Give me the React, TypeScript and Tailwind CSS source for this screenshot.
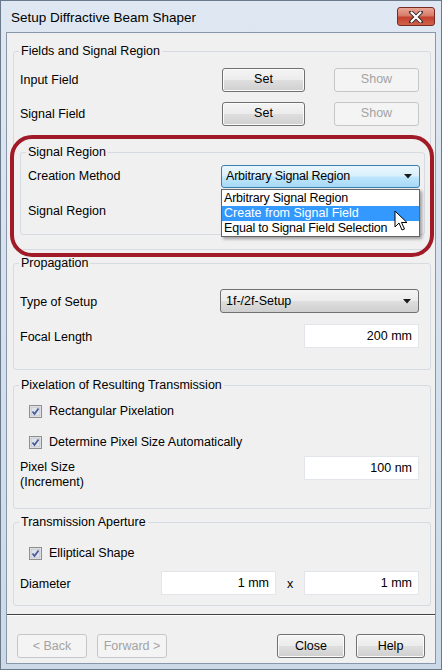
import React from "react";

const font = { fontFamily: '"Liberation Sans", Arial, sans-serif' };

function Btn({ children, w, disabled }: { children: React.ReactNode; w: string; disabled?: boolean }) {
  return (
    <div
      className={
        "h-[24px] flex items-center justify-center rounded-[3px] border text-[12.5px] " +
        w +
        " " +
        (disabled
          ? "border-[#c3c7ca] bg-[#f4f4f4] text-[#a3a3a3]"
          : "border-[#707070] bg-[linear-gradient(to_bottom,#f4f4f4_0%,#ececec_48%,#dedede_52%,#cfcfcf_100%)] text-black shadow-[inset_0_0_0_1px_#fbfbfb]")
      }
    >
      {children}
    </div>
  );
}

function Arrow() {
  return (
    <svg width="9" height="5" viewBox="0 0 9 5">
      <path d="M0 0 H8 L4 4.5 Z" fill="#1a1a1a" />
    </svg>
  );
}

function Check() {
  return (
    <svg width="13" height="13" viewBox="0 0 13 13">
      <rect x="0.5" y="0.5" width="12" height="12" fill="#f4f4f4" stroke="#8e8f8f" />
      <rect x="2" y="2" width="9" height="9" fill="#dfe3ea" stroke="#b8bcc4" strokeWidth="0.8" />
      <path d="M3.5 6.5 L5.5 9 L9.5 3.5" fill="none" stroke="#4a5d9a" strokeWidth="1.8" />
    </svg>
  );
}

function Input({ value, w = "w-[115px]" }: { value: string; w?: string }) {
  return (
    <div className={"h-[24px] bg-white border border-[#e2e6ea] flex items-center justify-end pr-[6px] text-[12.5px] " + w}>
      {value}
    </div>
  );
}

function Group({ title, className, children }: { title: string; className: string; children: React.ReactNode }) {
  return (
    <div className={"relative border border-[#d5dbe0] rounded-[3px] " + className}>
      <span className="absolute -top-[9px] left-[5px] px-[2px] bg-[#f0f0f0] leading-[16px] text-[12.5px]">{title}</span>
      {children}
    </div>
  );
}

export default function App() {
  return (
    <div className="w-[442px] h-[670px] bg-white" style={font}>
      <div className="relative w-[442px] h-[670px] border border-[#6b7a8a] bg-[linear-gradient(to_bottom,#dfe8f2,#cbd9e8)] flex flex-col text-black">
        {/* title bar */}
        <div className="h-[31px] flex items-center pl-[10px] relative">
          <span className="text-[13.5px] mt-[4px]">Setup Diffractive Beam Shaper</span>
          <div className="absolute left-[396px] top-[6px] w-[38px] h-[19px] rounded-[3px] border border-[#7a2a22] bg-[linear-gradient(to_bottom,#e8a596_0%,#d87c6a_45%,#c4412f_55%,#d0634c_100%)] flex items-center justify-center">
            <svg width="14" height="12" viewBox="0 0 14 12">
              <path d="M2 1 L12 11 M12 1 L2 11" stroke="#3a2a2a" strokeWidth="4" strokeLinecap="round" />
              <path d="M2.5 1.5 L11.5 10.5 M11.5 1.5 L2.5 10.5" stroke="#ffffff" strokeWidth="2.2" strokeLinecap="round" />
            </svg>
          </div>
        </div>
        {/* client */}
        <div className="mx-[5px] h-[632px] border border-[#8898aa] bg-[#f0f0f0] flex flex-col text-[12.5px]">
          <div className="pt-[18px] pl-[6px] pr-[4px] flex flex-col">
            <Group title="Fields and Signal Region" className="pt-[16px] pb-[14px] pl-[6px] pr-[11px]">
              <div className="flex items-center h-[23px]">
                <span className="flex-1 pt-[2px]">Input Field</span>
                <Btn w="w-[83px]">Set</Btn>
                <div className="w-[29px]" />
                <Btn w="w-[85px]" disabled>Show</Btn>
              </div>
              <div className="flex items-center h-[23px] mt-[11px]">
                <span className="flex-1 pt-[2px]">Signal Field</span>
                <Btn w="w-[83px]">Set</Btn>
                <div className="w-[29px]" />
                <Btn w="w-[85px]" disabled>Show</Btn>
              </div>
              <Group title="Signal Region" className="mt-[27px] mr-[-6px] pt-[12px] pb-[12px] pl-[7px] pr-[4px]">
                <div className="flex items-center h-[23px]">
                  <span className="flex-1">Creation Method</span>
                  <div className="relative w-[199px]">
                    <div className="h-[23px] rounded-[3px] border border-[#3c7fb1] bg-[linear-gradient(to_bottom,#eaf6fd_0%,#d9f0fc_48%,#bee6fd_52%,#a7d9f5_100%)] flex items-center pl-[4px] pr-[6px]">
                      <span className="flex-1 tracking-[-0.2px]">Arbitrary Signal Region</span>
                      <Arrow />
                    </div>
                    <div className="absolute left-0 top-[24px] w-[199px] h-[48px] bg-white border border-[#646464] shadow-[2px_2px_3px_rgba(0,0,0,0.35)] py-[1px] z-10">
                      <div className="h-[15px] leading-[15px] pl-[2px] tracking-[-0.2px]">Arbitrary Signal Region</div>
                      <div className="h-[15px] leading-[15px] pl-[2px] bg-[#3399ff] text-white">Create from Signal Field</div>
                      <div className="h-[15px] leading-[15px] pl-[2px] tracking-[-0.2px]">Equal to Signal Field Selection</div>
                    </div>
                  </div>
                </div>
                <div className="flex items-center h-[23px] mt-[11px]">
                  <span className="pt-[2px]">Signal Region</span>
                </div>
              </Group>
            </Group>

            <Group title="Propagation" className="mt-[13px] pt-[25px] pb-[21px] pl-[6px] pr-[11px]">
              <div className="flex items-center h-[24px]">
                <span className="flex-1 pt-[2px]">Type of Setup</span>
                <div className="w-[199px] h-[24px] rounded-[3px] border border-[#707070] bg-[linear-gradient(to_bottom,#f4f4f4_0%,#ececec_48%,#dedede_52%,#cfcfcf_100%)] flex items-center pl-[5px] pr-[6px]">
                  <span className="flex-1">1f-/2f-Setup</span>
                  <Arrow />
                </div>
              </div>
              <div className="flex items-center h-[24px] mt-[11px]">
                <span className="flex-1 pt-[2px]">Focal Length</span>
                <Input value="200 mm" />
              </div>
            </Group>

            <Group title="Pixelation of Resulting Transmission" className="mt-[15px] pt-[17px] pb-[18px] pl-[6px] pr-[11px]">
              <div className="flex items-center h-[16px] pl-[9px] gap-[7px]">
                <Check />
                <span>Rectangular Pixelation</span>
              </div>
              <div className="flex items-center h-[16px] mt-[15px] pl-[9px] gap-[7px]">
                <Check />
                <span>Determine Pixel Size Automatically</span>
              </div>
              <div className="flex items-start mt-[6px]">
                <div className="flex-1 pt-[4px] leading-[15px]">
                  <div>Pixel Size</div>
                  <div>(Increment)</div>
                </div>
                <Input value="100 nm" />
              </div>
            </Group>

            <Group title="Transmission Aperture" className="mt-[13px] pt-[22px] pb-[10px] pl-[6px] pr-[11px]">
              <div className="flex items-center h-[16px] pl-[9px] gap-[7px]">
                <Check />
                <span>Elliptical Shape</span>
              </div>
              <div className="flex items-center h-[24px] mt-[10px]">
                <span className="flex-1 pt-[2px]">Diameter</span>
                <Input value="1 mm" />
                <span className="w-[28px] text-center pt-[2px]">x</span>
                <Input value="1 mm" />
              </div>
            </Group>
          </div>

          <div className="mt-[8px] h-[2px] border-t border-[#404040] border-b border-b-white" />

          <div className="flex items-center mt-[18px] pl-[10px] pr-[10px]">
            <Btn w="w-[70px]" disabled>&lt; Back</Btn>
            <div className="w-[10px]" />
            <Btn w="w-[70px]" disabled>Forward &gt;</Btn>
            <div className="flex-1" />
            <Btn w="w-[68px]">Close</Btn>
            <div className="w-[11px]" />
            <Btn w="w-[69px]">Help</Btn>
          </div>
        </div>

        {/* red highlight */}
        <div className="absolute left-[9px] top-[134px] w-[424px] h-[122px] rounded-[22px] border-[4px] border-[#a01b27] pointer-events-none z-20" />

        {/* cursor */}
        <svg className="absolute left-[393px] top-[209px] z-30" width="14" height="22" viewBox="0 0 14 22">
          <path d="M1 1 L1 17 L5 13 L8 20 L10.5 19 L7.5 12.5 L13 12.5 Z" fill="#ffffff" stroke="#000" strokeWidth="1" strokeLinejoin="round" />
        </svg>
      </div>
    </div>
  );
}
